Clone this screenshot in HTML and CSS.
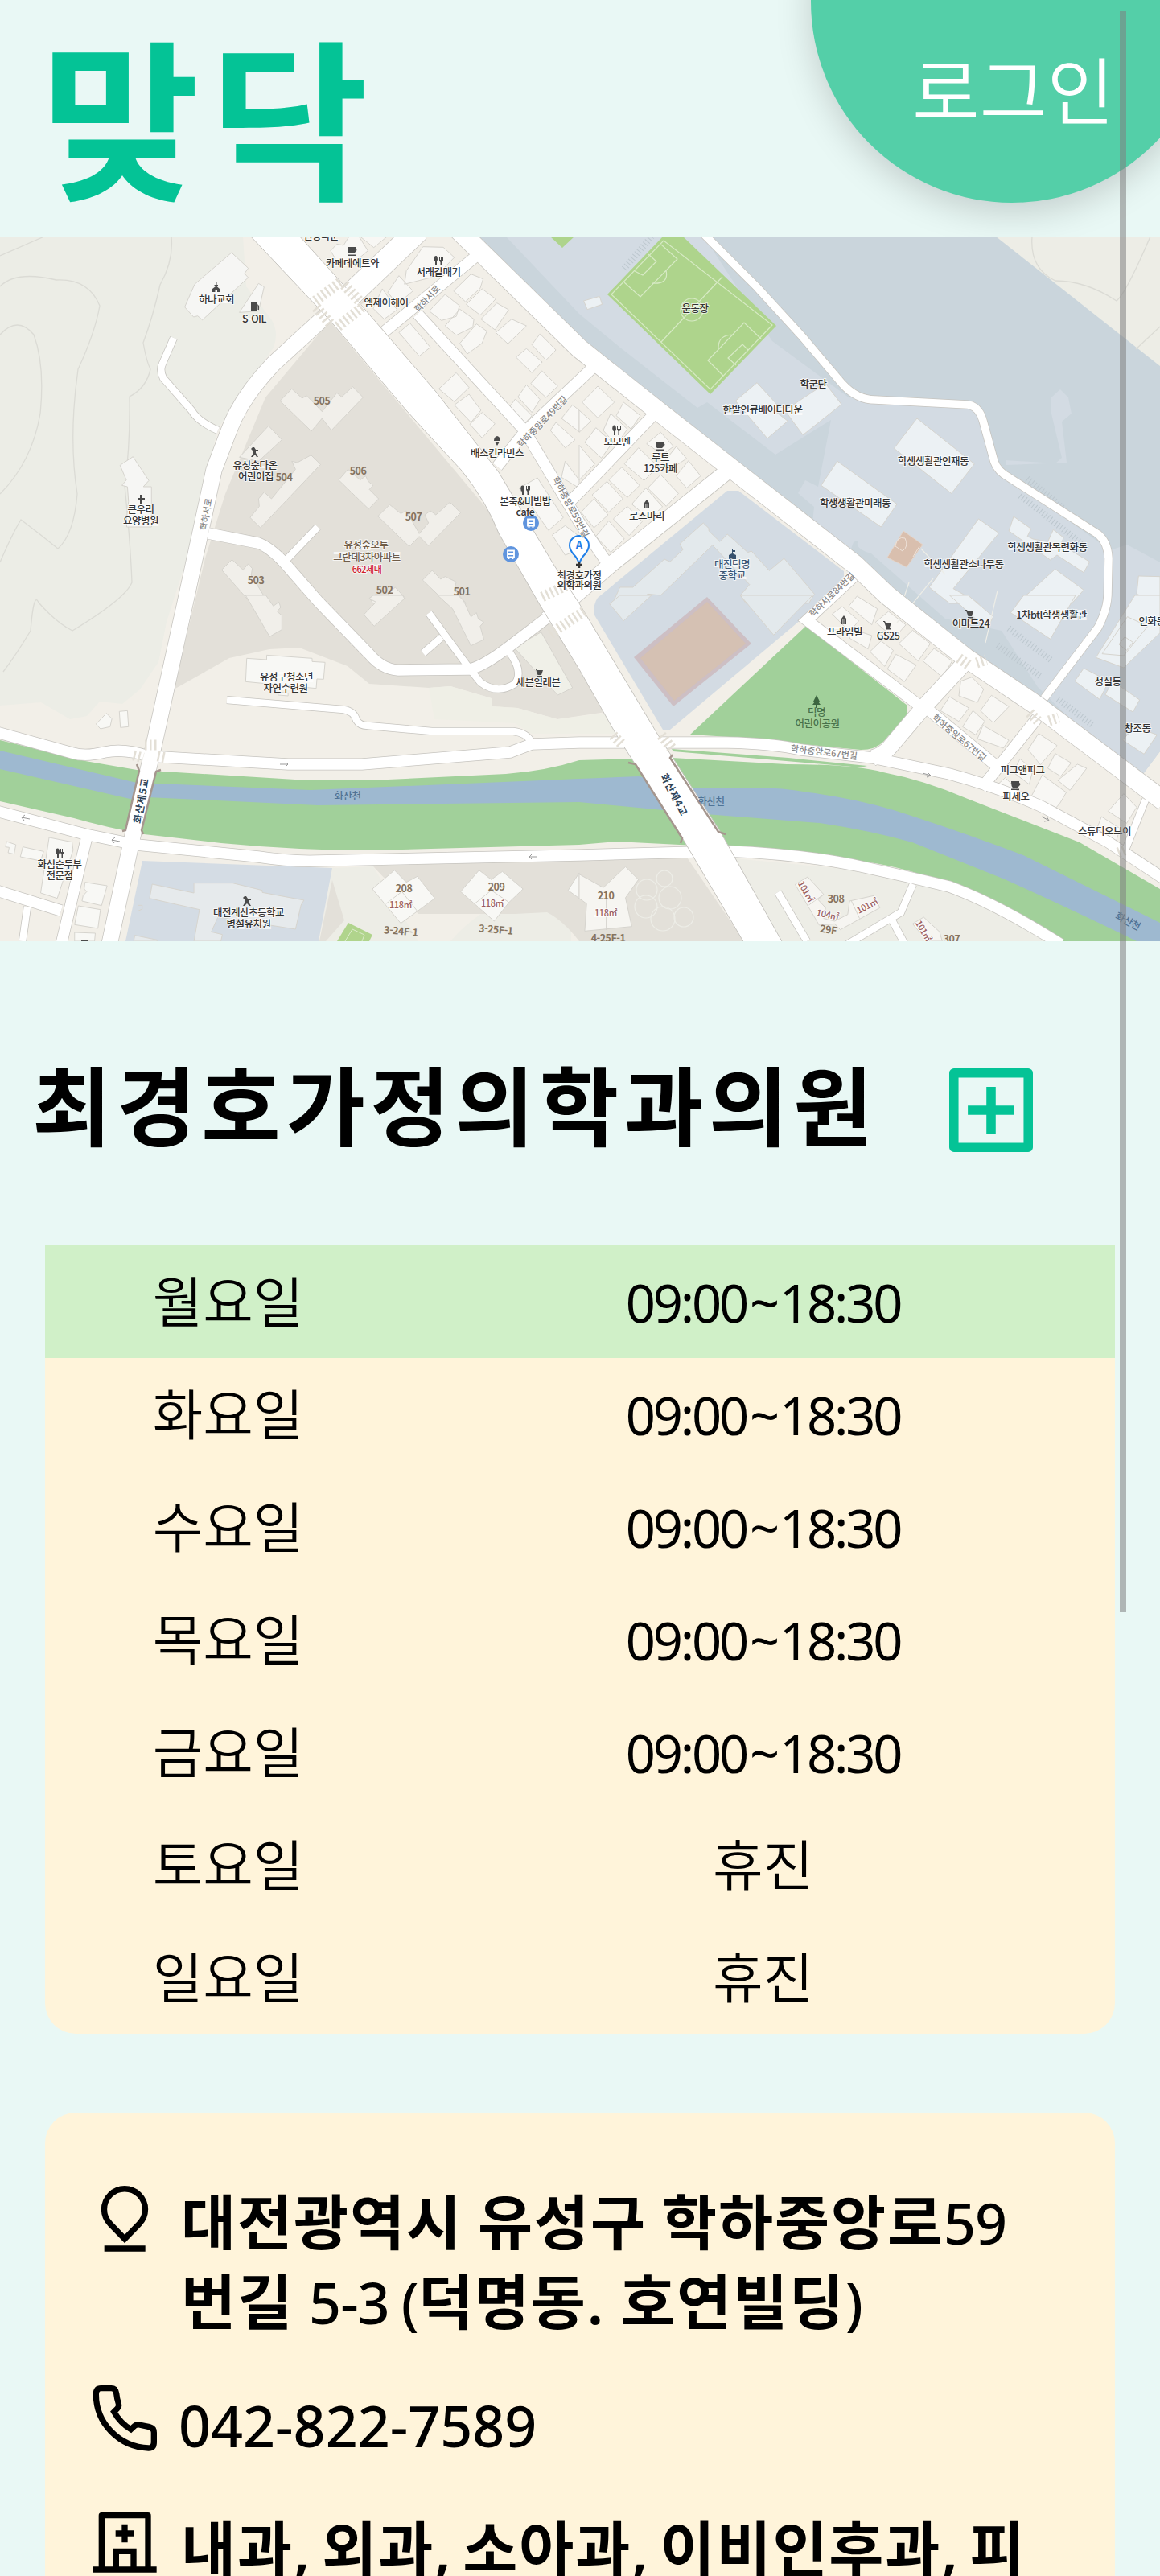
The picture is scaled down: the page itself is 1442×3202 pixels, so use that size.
FILE: index.html
```html
<!DOCTYPE html>
<html lang="ko">
<head>
<meta charset="utf-8">
<title>맞닥</title>
<link rel="stylesheet" href="styles.css">
</head>
<body>
<header class="header">
  <h1 class="logo">맞닥</h1>
  <a class="login"><span>로그인</span></a>
</header>

<svg class="map" viewBox="0 0 1442 876" width="1442" height="876">
  <rect width="1442" height="876" fill="#f2efe8"/>
  <!-- land use -->
  <path fill="#ecede6" d="M0 0H302L306 62L338 104Q347 120 340 138L270 240L240 376L207 479L197 529L174 563L152 581L124 578L108 596L87 600L51 579L0 583Z"/>
  <path fill="#e3e0d9" d="M216 563L285 524L335 513L372 511L432 534L459 556L533 561L560 559L611 574V584L643 586L693 600L760 590L700 470L640 380L410 105L330 200L280 320L255 400Z"/>
  <path fill="#efefe6" d="M533 561L560 559L611 574V584L643 586L693 600L770 590V618H661L640 605L540 600Z"/>
  <path fill="#cad5dc" d="M590 0H1442V640L1412 680L1056 408L720 139Z"/>
  <path fill="#d3dbe3" d="M629 0H875L960 130L1055 200L1215 208L1240 290L1380 390L1401 383L1442 405V640L1412 680L1290 560L1245 490L1175 475L1083 394Q1050 385 1080 365L1134 349L1195 320L1224 314L1195 345L1207 365L1170 378L1134 349L1061 380L1056 393L1010 356L1012 336L992 319L1001 303L1017 311L1033 228L964 271L879 206L867 213L771 138L720 96Z"/>
  <path fill="#d3dbe3" d="M1312 282L1320 275L1307 220V200L1318 190L1328 200L1332 220L1320 230L1326 281L1250 284V278Z"/>
  <path fill="#edede6" d="M1238 0H1442V161Z"/>
  <path fill="#d3dbe3" d="M904 316H918L1049 416L1049 424L996 476L833 613H824L738 469Q738 456 743 449Z"/>
  <path fill="#edede6" d="M413 785L464 783L520 876H397ZM560 876Q590 840 640 820Q690 818 710 860V876ZM880 770L1070 788L1180 815L1319 876H960Z"/>
  <path fill="#e3e0d9" d="M464 783L850 766L925 876H720Q700 850 680 840L640 842H580L520 842ZM413 800L428 850L405 876H397Z"/>
  <path fill="#d4dce4" d="M177 776L413 785L396 876H156Z"/>
  <!-- stream -->
  <path fill="#a1d09a" d="M0 626L106 652L170 663L367 675H482L629 668Q680 664 720 651L835 648L978 656Q1060 656 1098 666Q1150 676 1203 699L1342 753L1442 811V876H1319Q1260 840 1203 816Q1150 790 1088 779L904 759L766 752L720 756L459 763Q370 763 275 754L179 743Q130 734 92 723L0 702Z"/>
  <path fill="#9eb9d0" d="M0 639L170 679L386 688L720 674L794 671L858 686L923 685Q970 684 1005 691Q1060 698 1111 713Q1190 738 1272 769L1442 853V876H1413Q1340 840 1249 799L1134 753Q1080 738 1019 729L877 718L720 703L395 707L184 697L166 700L0 662Z"/>
  <!-- contours -->
  <g fill="none" stroke="#dbdbd5" stroke-width="1.3">
    <path d="M0 24L55 0M213 0Q216 30 199 60Q190 100 178 132Q182 155 187 165Q182 188 161 199Q162 260 155 310Q162 380 164 430Q156 450 90 490Q70 480 48 455Q42 440 38 490Q20 520 4 541"/>
    <path d="M0 62Q20 42 70 54Q110 52 124 86Q118 120 97 165Q85 250 96 320Q92 370 72 388Q50 370 26 352Q15 370 0 405"/>
    <path d="M0 122Q22 98 42 122Q56 160 50 220Q40 280 0 320M1283 0Q1280 40 1312 55Q1350 55 1388 80Q1400 70 1430 0M1412 140L1442 112"/>
  </g>
  <!-- sports grounds -->
  <path fill="#aed48c" d="M824 0H849L965 111L883 196L755 72ZM684 0H714L699 14Z"/>
  <g fill="none" stroke="#d7eac5" stroke-width="1.2">
    <path d="M760 72L825 5L960 110L883 190ZM822 131L898 50M776 57L796 75L842 28L822 10M789 43L799 48L816 31L806 22M946 127L925 107L880 154L899 173M930 141L923 134L905 151L915 160M810 58Q832 60 828 42M893 138Q893 122 912 122"/>
    <circle cx="860" cy="91" r="14"/>
  </g>
  <path fill="#cdbfc4" d="M879 448L934 506L837 584L788 523Z"/>
  <path fill="#d5c1b3" d="M879 454L927 506L838 577L796 524Z"/>
  <path fill="#d9bfae" stroke="#e6d5c9" d="M1123 366L1147 383L1127 411L1103 399Z"/>
  <path fill="none" stroke="#eee2d9" d="M1113 385Q1115 372 1125 375Q1130 385 1122 391ZM1135 398L1143 385"/>
  <path fill="#a1d09a" d="M1002 484L1128 583V594L1098 628Q1088 638 1070 638L996 631L923 623L858 619ZM835 637L980 648L1078 658L1070 660L837 640Z"/>
  <path fill="#b0d48c" d="M433 853L463 868L459 876H419Z"/>
  <path fill="none" stroke="#dcebcb" d="M429 876L438 861L453 868L450 876"/>

  <!-- buildings -->
  <g class="bld" transform="translate(0 -4) scale(.45918 .33333)">
    <path fill="#f6f6f4" d="M627 72L672 130L662 150L672 165L548 323L535 308L524 312L500 275L527 190ZM700 187L715 200L700 290L648 295Z"/>
    <path fill="#f8f7f4" d="M895 65L912 40L930 45L945 12L972 12L996 65L950 118L910 100ZM975 12H1048L1012 53ZM1145 50L1200 52L1230 90L1180 160L1095 190L1100 140ZM1080 158L1118 215L1075 265L1050 220ZM1035 207L1075 285L1040 320L1010 280ZM1275 152L1308 170L1300 205L1260 255L1228 215ZM1205 228L1244 270L1235 310L1195 325L1162 290ZM1305 207L1342 245L1300 305L1262 265ZM1245 283L1283 320L1280 350L1235 380L1205 345ZM1345 260L1377 285L1340 360L1302 320ZM1290 338L1318 365L1305 410L1265 450L1245 410ZM1385 320L1425 345L1375 412L1342 370ZM1110 335L1165 425L1135 458L1080 370ZM1462 375L1505 435L1478 473L1440 415ZM1425 430L1468 480L1440 520L1397 462ZM1235 520L1270 575L1230 628L1188 580ZM1270 600L1302 660L1275 705L1230 640ZM1305 668L1340 710L1305 763L1272 712ZM1467 513L1510 570L1478 612L1437 560ZM1425 565L1462 620L1440 668L1402 610ZM1395 618L1440 680L1420 710L1378 650ZM1505 705L1557 770L1530 800L1490 735ZM1455 912L1525 1060L1485 1108L1440 1020L1405 950ZM1530 850L1568 920V950L1520 910ZM1530 1090L1568 1130V1180L1530 1200L1495 1125ZM1550 640L1568 660V740L1520 690Z"/>
    <path fill="#f1efea" d="M790 580L818 615L830 605L872 665L912 595L925 610L955 572L983 612L897 735L872 690L843 738L758 625ZM727 718L763 770L700 850L648 835ZM842 827L868 862L705 1098L677 1060L702 1018L700 990L715 965L735 990L800 880L790 850L805 855ZM942 880L975 920L990 905L997 925L1010 940L1000 955L1025 990L998 1028L917 920ZM1055 1012L1085 1045L1100 1035L1135 1120L1160 1080L1150 1050L1165 1035L1180 1050L1218 1003L1247 1042L1160 1165L1135 1130L1108 1168L1023 1055ZM628 1217L658 1255L672 1233L683 1250L680 1275L727 1380H680L600 1255ZM1170 1257L1193 1290L1205 1280L1235 1300L1230 1330L1262 1380H1210L1144 1293ZM1070 1320L1097 1360L1080 1380H1010L1000 1360L1018 1345L1040 1360Z"/>
    <path fill="#f6f6f4" d="M360 833L403 922L388 945H410V1095H343V1060L348 1000L345 945L330 940L342 920L325 865Z"/>
  </g>
  <g class="bld" transform="translate(720 -4) scale(.46046 .33333)">
    <path fill="#f8f7f4" d="M50 570L95 630L50 688L8 630ZM120 630L165 680L140 730L100 680ZM85 672L130 730L100 790L65 735ZM45 725L90 780L60 838L15 780ZM0 660L32 700L0 742ZM0 790L42 860L0 920ZM220 742L255 795L225 825L182 785ZM262 795L290 840L240 885L225 860ZM160 800L213 870L175 922L122 860ZM295 848L328 905L290 950L262 905ZM115 872L163 940L130 985L80 920ZM220 900L268 970L235 1018L185 950ZM75 925L118 990L80 1040L35 975ZM180 950L225 1020L190 1065L142 1010ZM40 990L78 1050L40 1098L5 1040ZM130 1018L170 1075L135 1127L92 1065ZM80 1072L122 1140L85 1190L45 1130Z"/>
    <path fill="#ecf1f4" d="M12 252L55 235L62 265L22 284ZM480 557L535 640L530 665L563 700L508 765L422 625ZM665 560L708 638L604 752L555 660ZM912 690L1067 860L1005 970L850 802ZM697 850L858 1010L815 1095L653 940ZM1078 1065L1133 1118L1010 1325L1080 1380H1000L945 1320ZM1173 1056L1220 1102L1210 1130L1225 1140L1265 1150L1280 1105L1308 1135L1300 1160L1378 1225L1362 1265L1290 1200L1272 1218L1160 1110ZM1285 1252L1362 1330L1330 1380H1180L1215 1340ZM1510 1278L1568 1280V1380L1505 1345Z"/>
    <path fill="#e3e9ec" d="M335 1080L350 1100V1110L380 1150L400 1122L455 1190L465 1185L513 1258L553 1212L635 1345L620 1380H450L435 1350L460 1310L360 1163L220 1350L185 1345L165 1370L90 1380L110 1320H145L230 1215L245 1225L280 1180L272 1158Z"/>
  </g>
  <g class="bld" transform="translate(0 446) scale(.45918 .33333)">
    <path fill="#f1efea" d="M665 0H720L740 40L755 25L760 45L750 60L763 75V128L730 154ZM1010 0L1000 12L1018 25L985 72L1013 115L1095 12L1090 0ZM1185 0H1240L1255 20L1275 80L1290 65L1295 88L1310 100L1300 115L1310 165L1275 188L1225 50Z"/>
    <path fill="#f8f8f5" d="M668 235L722 240V223L845 235V247L880 250L876 313L858 312L856 347L800 340L665 322ZM753 360L780 365V375L753 372ZM288 440L303 460L298 490L272 498L260 480ZM323 433L345 430L348 490L326 493ZM133 903L195 920L198 950L155 1130L110 1110ZM62 938L118 955L110 990L55 975ZM18 918L43 930L38 965L22 960L25 940L15 938ZM230 1070L290 1083L275 1157L222 1140L225 1120L235 1105L228 1095ZM212 1158L272 1172L265 1242L202 1228ZM202 1257L258 1260L256 1290H202ZM1068 1025L1100 1070L1130 1048L1177 1130L1130 1178L1085 1223L1008 1095ZM1297 1025L1330 1060L1360 1030L1416 1095L1378 1145L1338 1215L1247 1105ZM1568 1035L1538 1100L1568 1130Z"/>
    <path fill="#f0f0e8" d="M1392 195L1465 137L1550 345L1510 372Z"/>
    <path fill="#e6eaec" d="M412 1077L525 1110V1073H630L710 1100V1108L823 1137L815 1155L800 1245L590 1200L572 1255L602 1265L598 1290H525L540 1172L405 1130ZM365 1268L425 1285V1290H362Z"/>
    <path fill="none" d="M1045 1150L1088 1105L1130 1178M1285 1150L1330 1100L1378 1145M373 1156H385V1170L374 1177"/>
  </g>
  <g class="bld" transform="translate(720 446) scale(.46046 .33333)">
    <path fill="#e3e9ec" d="M110 0H195L120 95L82 32ZM435 0H630L525 148Z"/>
    <path fill="#ecf1f4" d="M1000 0H1050L1118 80L1100 125ZM1200 0H1340L1272 163L1165 65ZM1500 0H1568V140L1470 270L1395 232ZM1362 272L1430 320L1405 388L1338 320ZM1440 320L1513 390L1495 435L1420 370ZM1500 490L1560 520L1525 592L1467 540Z"/>
    <path fill="#f8f7f4" d="M750 3L805 50L790 110L728 40ZM710 42L755 95L730 135L683 70ZM835 60L882 110L850 160L800 100ZM735 125L790 150L780 200L730 160ZM900 130L948 180L915 245L863 180ZM815 170L848 205L825 265L785 210ZM855 220L910 260L878 322L832 275ZM958 198L1007 245L980 305L928 245ZM1060 305L1092 350L1075 400L1025 375L1030 320ZM1113 373L1160 415L1118 475L1083 430ZM1000 378L1052 420L1025 470L975 430ZM1063 430L1095 470L1070 520L1035 490ZM1090 485L1160 540L1145 570L1075 535ZM1240 515L1290 560L1245 632L1212 575ZM1285 590L1328 625L1300 675L1265 645ZM1345 630L1370 645L1325 727L1292 690ZM1190 610L1225 650L1215 705L1172 660ZM1150 680L1190 735L1170 755L1122 715ZM1250 670L1315 735L1298 775L1275 812L1215 765ZM1470 740L1505 790L1478 850L1428 805ZM1410 825L1460 870L1445 938L1395 880Z"/>
    <path fill="#f6f5f1" d="M125 1012L160 1060L125 1128L142 1235L15 1252L20 1150L0 1130V1040L65 1090ZM617 1050L660 1115L645 1135L665 1165L660 1205L690 1215L725 1190L730 1140L795 1120L812 1165L705 1247L690 1225L648 1230L583 1078ZM930 1200L973 1255L980 1290H940L900 1225Z"/>
    <path fill="none" stroke="#aaa" d="M1480 80L1535 115L1470 225L1412 218ZM1473 155L1495 175L1478 205L1457 183ZM73 1130V1248M620 1155L660 1115M735 1140L757 1205"/>
  </g>
  <g fill="none" stroke="#edede7" stroke-width="1.2">
    <circle cx="826" cy="798" r="10"/><circle cx="804" cy="812" r="13"/><circle cx="833" cy="822" r="14"/><circle cx="803" cy="833" r="14"/><circle cx="824" cy="848" r="15"/><circle cx="850" cy="846" r="12"/>
    <path d="M1115 480L1160 425M1130 430L1120 460M1225 505L1240 440M1145 388L1175 420"/>
  </g>
  <!-- parking hatches -->
  <g fill="none" stroke="#bcc7ce" stroke-width="8" stroke-dasharray="1 3">
    <path d="M1277 301L1322 338M1268 322L1345 382M1254 487L1307 527M1240 508L1295 548M1315 575L1358 607M776 40L810 0"/>
  </g>

  <!-- streets -->
  <g class="casing">
    <path stroke-width="10" d="M216 126L202 158Q198 166 203 176L238 216Q246 230 271 241M354 404L395 361M533 468L585 539L597 554Q618 570 640 556Q652 540 631 514M526 518L549 498M282 576L427 588Q440 590 443 601Q447 608 457 608L537 615H638Q655 617 661 629M34 833L28 876M967 815L1003 876M1135 805L1120 840L1053 880M1109 850L1125 880M1424 700L1398 765"/>
    <path stroke-width="15" d="M1155 589L1236 656M1289 599L1220 686M259 369L321 381Q335 386 354 406L395 453L459 519Q475 538 495 539L583 538Q600 535 634 509L684 471M478 118L590 26M519 96L652 241L720 355L759 412M618 286L652 243L740 160M705 333L722 316L812 222M1061 423L1003 477L1143 583M108 746L76 880M-4 813L76 838"/>
    <path stroke-width="11" d="M868 -10L941 63L996 123L1047 183Q1065 203 1088 203L1203 209Q1217 211 1222 229L1236 280Q1240 292 1255 300L1365 370Q1377 380 1378 400L1377 446Q1376 465 1365 486L1298 574"/>
    <path stroke-width="15" d="M-5 616L90 642Q106 647 130 641Q155 636 184 646L358 656H450L634 641L661 631L720 629H775L904 629Q960 630 996 638L1084 648L1180 668Q1240 684 1296 709L1378 753L1445 797M-5 714L106 743L170 756L321 771Q360 777 395 776L720 769L904 764Q1000 768 1070 783Q1130 796 1180 808Q1240 830 1319 880"/>
    <path stroke-width="21" d="M412 92L340 158Q300 200 285 240L266 290L230 456L190 638L166 740L136 880M904 292L759 408L680 476M1201 528L1150 583L1105 636Q1098 644 1085 648"/>
    <path stroke-width="25" d="M570 -8L720 139L817 216L909 288L1063 408L1103 446L1201 524L1289 583L1447 702"/>
    <path stroke-width="30" d="M430 78L520 -8"/>
  </g>
  <g class="roads">
    <path stroke-width="8.5" d="M216 126L202 158Q198 166 203 176L238 216Q246 230 271 241M354 404L395 361M533 468L585 539L597 554Q618 570 640 556Q652 540 631 514M526 518L549 498M282 576L427 588Q440 590 443 601Q447 608 457 608L537 615H638Q655 617 661 629M34 833L28 876M967 815L1003 876M1135 805L1120 840L1053 880M1109 850L1125 880M1424 700L1398 765"/>
    <path stroke-width="13.5" d="M1155 589L1236 656M1289 599L1220 686M259 369L321 381Q335 386 354 406L395 453L459 519Q475 538 495 539L583 538Q600 535 634 509L684 471M478 118L590 26M519 96L652 241L720 355L759 412M618 286L652 243L740 160M705 333L722 316L812 222M1061 423L1003 477L1143 583M108 746L76 880M-4 813L76 838"/>
    <path stroke-width="9.5" d="M868 -10L941 63L996 123L1047 183Q1065 203 1088 203L1203 209Q1217 211 1222 229L1236 280Q1240 292 1255 300L1365 370Q1377 380 1378 400L1377 446Q1376 465 1365 486L1298 574"/>
    <path stroke-width="13.5" d="M-5 616L90 642Q106 647 130 641Q155 636 184 646L358 656H450L634 641L661 631L720 629H775L904 629Q960 630 996 638L1084 648L1180 668Q1240 684 1296 709L1378 753L1445 797M-5 714L106 743L170 756L321 771Q360 777 395 776L720 769L904 764Q1000 768 1070 783Q1130 796 1180 808Q1240 830 1319 880"/>
    <path stroke-width="19.5" d="M412 92L340 158Q300 200 285 240L266 290L230 456L190 638L166 740L136 880M904 292L759 408L680 476M1201 528L1150 583L1105 636Q1098 644 1085 648"/>
    <path stroke-width="23.5" d="M570 -8L720 139L817 216L909 288L1063 408L1103 446L1201 524L1289 583L1447 702"/>
    <path stroke-width="28.5" d="M430 78L520 -8"/>
  </g>
  <path fill="#fff" stroke="#c6c4bf" d="M310 -2L395 88L416 111L505 216Q545 260 574 291Q605 330 620 369L670 456L720 538L766 619L849 749L925 878H973L895 739L817 618L720 456L689 409L620 293L542 193L448 84L426 59L371 -2Z"/>
  <path fill="none" stroke="#fff" stroke-width="17" d="M404 96L418 84M424 80L436 70M694 466L706 456"/>
  <path fill="none" stroke="#fff" stroke-width="12" d="M762 629H832"/>
  <!-- crossings -->
  <g fill="none" stroke="#e3dfd6" stroke-width="13" stroke-dasharray="2.5 3.5">
    <path d="M392 80L424 56M428 60L452 86M393 88L412 110M420 112L450 88M674 448L712 430M684 494L726 466M180 632H198M166 645L178 648M196 646L206 648M762 620L774 632M822 620L835 636M1192 524L1206 534M1214 530L1226 526M1280 592L1290 602M1304 602L1316 598M1390 766L1400 762"/>
  </g>
  <!-- bridge rails -->
  <path fill="none" stroke="#a5968e" stroke-width="2.5" d="M170 656L173 664L156 738L152 739M200 663L194 665L176 738L178 743M781 654L790 656L848 748L846 754M836 644L833 648L893 740L902 743"/>

  <g class="arrows"><path d="M348 656H358M355 653L358 656L355 659M37 724L27 722M31 719L27 722L30 726M149 752L139 750M143 747L139 750L142 754M668 771H658M661 768L658 771L661 774M1147 667L1157 670M1153 666L1157 670L1152 672M1295 721L1304 726M1301 721L1304 726L1298 727"/></g>

  <!-- place symbols -->
  <g fill="#4a4a4a">
    <path d="M432 13H442V15Q445 16 442 19L440 21H434Q432 20 432 13ZM432 22.500H442V24H432Z"/>
    <path d="M815 255H825V257Q828 258 825 261L823 263H817Q815 262 815 255ZM815 264.500H825V266H815ZM1257 677H1267V679Q1270 680 1267 683L1265 685H1259Q1257 684 1257 677ZM1257 686.500H1267V688H1257Z"/>
    <path d="M540 25Q544 22 544 29L543 31V36H541V31Q538 29 540 25ZM546 25H547V29H548V25H549V29H550V25H551V30L549 32V36H547.500V32L546 30ZM648 310Q652 308 652 315L651 317V321H649V317Q646 315 648 310ZM654 310H655V314H656V310H657V314H658V310H659V315L657 317V321H655.500V317L654 315ZM762 235Q766 233 766 240L765 242V247H763V242Q760 240 762 235ZM767 235H768V239H769V235H770V239H771V235H772V240L770 242V247H768.500V242L767 240ZM70 761Q74 759 74 766L73 768V772H71V768Q68 766 70 761ZM75 761H76V765H77V761H78V765H79V761H80V766L78 768V772H76.500V768L75 766Z"/>
    <path d="M268 57H269.500V60H271V61H269.500V62L273 65V69H270V66H267.500V69H264V65L268 62V61H266.500V60H268ZM312 82H319V93H312ZM320 84L322 86V91H320.500V87ZM174 321H177V325H180V328H177V332H174V328H171V325H174ZM618 248Q622 249 622 254H614Q614 249 618 248ZM615 255H621L618 260ZM801 338V331L804 327L807 331V338H805.500V332H804.700V338H803.300V332H802.500V338ZM1046 482V475L1049 471L1052 475V482H1050.500V476H1049.700V482H1048.300V476H1047.500V482Z"/>
    <path d="M665 537H667L668 539H675L673 545H668.500L666 538H665ZM668 546H674V547H668ZM1200 464H1202L1203 466H1210L1208 472H1203.500L1201 465H1200ZM1203 473H1209V474.500H1203ZM1098 478H1100L1101 480H1108L1106 486H1101.500L1099 479H1098ZM1101 487H1107V488.500H1101Z"/>
    <path d="M314 262H316L318 265H321V267H318V269L321 274H319L317 271L314 274H312L315 269V267L312 264ZM304 820H306L308 823H312V825H309V827L312 832H310L307 829L304 832H302L305 827V825L302 822Z"/>
    <path fill="#36506d" d="M910 388H911V390H914V392H911V394L915 396V401H906V396L910 394Z"/>
    <path fill="#3c6540" d="M1015 570L1019 578H1017L1020 582H1016V586H1014V582H1010L1013 578H1011Z"/>
    <path d="M101 874H110V876H101Z"/>
  </g>
  <g>
    <g fill="#5f94de"><circle cx="660" cy="356" r="10"/><circle cx="635" cy="395" r="10"/></g>
    <path fill="none" stroke="#fff" stroke-width="1.8" d="M656 351.500H664V359.500H656ZM656 356H664M657.500 360V362M662.500 360V362M631 390.500H639V398.500H631ZM631 395H639M632.500 399V401M637.500 399V401"/>
    <path fill="#fff" stroke="#1f7fe8" stroke-width="2" d="M720 407Q718 400 713 395Q708 389 708 384A12 12 0 0 1 732 384Q732 389 727 395Q722 400 720 407Z"/>
    <path stroke="#333" stroke-width="2.500" d="M716 408H724M720 405V412"/>
    <text x="720" y="389" font-size="14" font-weight="600" fill="#1f7fe8" text-anchor="middle">A</text>
  </g>

  <g class="labels">
    <text x="399" y="4">선광타운</text><text x="438" y="38">카페데에트와</text><text x="545" y="49">서래갈매기</text>
    <text x="269" y="83">하나교회</text><text x="316" y="107">S-OIL</text><text x="480" y="87">엠제이헤어</text>
    <text x="618" y="274">배스킨라빈스</text><text x="175" y="344">큰우리</text><text x="175" y="358">요양병원</text>
    <text x="317" y="289">유성숲다온</text><text x="318" y="303">어린이집</text>
    <text x="653" y="334">본죽&amp;비빔밥</text><text x="653" y="347">cafe</text>
    <text x="720" y="426">최경호가정</text><text x="720" y="438">의학과의원</text>
    <text x="767" y="260">모모멘</text><text x="821" y="279">루트</text><text x="821" y="293">125카페</text><text x="804" y="352">로즈마리</text>
    <text x="864" y="94">운동장</text><text x="1011" y="188">학군단</text><text x="948" y="220">한밭인큐베이터타운</text>
    <text x="1160" y="284">학생생활관인재동</text><text x="1063" y="336">학생생활관미래동</text><text x="1302" y="391">학생생활관목련화동</text><text x="1198" y="412">학생생활관소나무동</text>
    <text x="1050" y="496">프라임빌</text><text x="1104" y="501">GS25</text><text x="1207" y="486">이마트24</text><text x="1307" y="475">1차btl학생생활관</text>
    <text x="1432" y="483">인화동</text><text x="1377" y="558">성실동</text><text x="1414" y="616">창조동</text>
    <text x="1271" y="668">피그앤피그</text><text x="1263" y="701">파세오</text><text x="1373" y="744">스튜디오브이</text>
    <text x="356" y="552">유성구청소년</text><text x="355" y="566">자연수련원</text><text x="669" y="559">세븐일레븐</text>
    <text x="74" y="785">화심순두부</text><text x="74" y="799">전문점</text><text x="309" y="845">대전계산초등학교</text><text x="309" y="859">병설유치원</text>
    <g fill="#3d5876"><text x="910" y="412">대전덕명</text><text x="910" y="426">중학교</text></g>
    <g fill="#48714a" class="park"><text x="1015" y="596">덕명</text><text x="1016" y="610">어린이공원</text></g>
    <g fill="#6f5c48"><text x="455" y="388">유성숲오투</text><text x="456" y="403">그란데3차아파트</text></g>
    <text x="456" y="418" class="red">662세대</text>
    <g class="num">
      <text x="400" y="209">505</text><text x="353" y="304">504</text><text x="445" y="296">506</text><text x="514" y="353">507</text><text x="318" y="432">503</text><text x="478" y="444">502</text><text x="574" y="446">501</text>
      <text x="502" y="815">208</text><text x="617" y="813">209</text><text x="753" y="824">210</text><text x="1039" y="828">308</text><text x="1183" y="878">307</text>
      <text x="498" y="868" transform="rotate(5 498 868)">3-24F-1</text><text x="616" y="866" transform="rotate(5 616 866)">3-25F-1</text><text x="756" y="877">4-25F-1</text><text x="1029" y="866" transform="rotate(8 1029 866)">29F</text>
    </g>
    <g class="area"><text x="498" y="835">118㎡</text><text x="612" y="833">118㎡</text><text x="753" y="845">118㎡</text><text x="1029" y="847" transform="rotate(12 1029 842)">104㎡</text><text x="1078" y="836" transform="rotate(-28 1078 832)">101㎡</text><text x="1002" y="818" transform="rotate(60 1002 814)">101㎡</text><text x="1148" y="867" transform="rotate(60 1148 863)">101㎡</text></g>
    <g class="street">
      <text transform="translate(534 80) rotate(-47)">학하서로</text><text transform="translate(260 346) rotate(-80)">학하서로</text>
      <text transform="translate(677 233) rotate(-46)">학하중앙로49번길</text><text transform="translate(706 338) rotate(62)">학하중앙로59번길</text>
      <text transform="translate(1037 448) rotate(-44)">학하서로84번길</text><text transform="translate(1024 645) rotate(7)">학하중앙로67번길</text><text transform="translate(1190 626) rotate(40)">학하중앙로67번길</text>
    </g>
    <g fill="#4f7396" class="water"><text x="432" y="700">화산천</text><text x="884" y="707">화산천</text><text transform="translate(1400 855) rotate(28)">화산천</text></g>
    <g fill="#2e4358" class="bridge"><text transform="translate(180 702) rotate(-80)">화산제5교</text><text transform="translate(834 696) rotate(63)">화산제4교</text></g>
  </g>
</svg>

<main class="detail">
  <div class="title">
    <h2>최경호가정의학과의원</h2>
    <svg class="add" viewBox="3 3 18 18"><path fill="none" stroke="#04c396" stroke-width="2" stroke-linejoin="round" d="M4 4H20V20H4ZM7 12H17M12 7V17"/></svg>
  </div>
  <div class="hours">
    <div class="row today"><span>월요일</span><span class="time">09:00<i>~</i>18:30</span></div>
    <div class="row"><span>화요일</span><span class="time">09:00<i>~</i>18:30</span></div>
    <div class="row"><span>수요일</span><span class="time">09:00<i>~</i>18:30</span></div>
    <div class="row"><span>목요일</span><span class="time">09:00<i>~</i>18:30</span></div>
    <div class="row"><span>금요일</span><span class="time">09:00<i>~</i>18:30</span></div>
    <div class="row"><span>토요일</span><span>휴진</span></div>
    <div class="row"><span>일요일</span><span>휴진</span></div>
  </div>
  <div class="info">
    <div class="item address">
      <svg class="icon" viewBox="106 102 240 270"><path d="M226 312L172 256A76.500 76.500 0 1 1 280 256ZM150 348H303"/></svg>
      <p>대전광역시 유성구 학하중앙로<span class="digits">59</span><br>번길 <span class="digits">5-3 (</span>덕명동. 호연빌딩<span class="digits">)</span></p>
    </div>
    <div class="item phone">
      <svg class="icon" viewBox="106 846 240 270"><path d="M137 869H176Q192 869 195 888Q197 908 203 926Q206 937 198 945L186 957Q210 999 249 1022L262 1010Q269 1003 280 1005L318 1013Q335 1017 335 1034V1070Q335 1092 315 1092C206 1088 119 1000 119 892Q119 869 137 869Z"/></svg>
      <p><span class="digits">042-822-7589</span></p>
    </div>
    <div class="item dept">
      <svg class="icon" viewBox="106 1320 240 270"><path stroke-linejoin="round" d="M140 1545V1343H313V1545"/><path d="M106 1545H345M194 1545V1477H259V1545M192 1410H260M226 1376V1444"/></svg>
      <p>내과, 외과, 소아과, 이비인후과, 피</p>
    </div>
  </div>
</main>
<div class="scrollbar"></div>
</body>
</html>
```
FILE: styles.css
```css
* { box-sizing: border-box; }
body {
  margin: 0;
  width: 1442px;
  height: 3202px;
  overflow: hidden;
  position: relative;
  background: #e9f8f5;
  color: #000;
  font-family: "Noto Sans", "Noto Sans CJK KR", sans-serif;
}
h1, h2, p { margin: 0; }
.header {
  position: relative;
  height: 294px;
  padding-left: 51px;
}
.logo {
  font-size: 214px;
  line-height: 298px;
  letter-spacing: 13px;
  font-weight: 700;
  color: #04c396;
  white-space: nowrap;
}
.login {
  position: absolute;
  left: 1008px;
  top: -248px;
  width: 500px;
  height: 500px;
  border-radius: 50%;
  background: #54cfa8;
  box-shadow: 0 12px 44px rgba(0, 0, 0, .17);
  color: #fff;
}
.login span {
  position: absolute;
  left: 126px;
  top: 296px;
  font-size: 91px;
  line-height: 130px;
  font-weight: 350;
  white-space: nowrap;
}
.map {
  display: block;
  position: relative;
  overflow: hidden;
  font-family: "Noto Sans CJK KR", sans-serif;
}
.bld path { stroke: #d6d4ce; stroke-width: 1; vector-effect: non-scaling-stroke; }
.casing path { fill: none; stroke: #c6c4bf; }
.roads path { fill: none; stroke: #fff; }
.arrows path { fill: none; stroke: #999; }
.labels text {
  font-size: 12.5px;
  font-weight: 500;
  letter-spacing: -.5px;
  text-anchor: middle;
  paint-order: stroke;
  stroke: rgba(255, 255, 255, .7);
  stroke-width: 2px;
}
.labels { fill: #333; }
.labels .red { fill: #d0202c; font-size: 11px; }
.labels .num { fill: #85735f; }
.labels .num text { font-weight: 700; stroke: none; }
.labels .area { fill: #9b5f60; }
.labels .area text { font-size: 11px; }
.labels .street { fill: #858585; }
.labels .street text { font-size: 11px; letter-spacing: 0; }
.labels .water text, .labels .park text { stroke: none; }
.labels .bridge text { font-weight: 700; letter-spacing: .8px; }

.title {
  display: flex;
  align-items: center;
  gap: 94px;
  height: 378px;
  padding: 42px 0 0 40px;
}
.title h2 {
  width: 1046px;
  font-size: 107px;
  font-weight: 700;
  line-height: 140px;
  letter-spacing: 6.7px;
  white-space: nowrap;
  padding-bottom: 10px;
}
.add { width: 104px; height: 104px; flex: none; }
.hours, .info { margin: 0 56px; background: #fff4da; }
.hours { height: 980px; border-radius: 0 0 38px 38px; overflow: hidden; }
.row {
  display: grid;
  grid-template-columns: 455px 875px;
  height: 140px;
  line-height: 140px;
  text-align: center;
  font-size: 68px;
  font-weight: 350;
}
.row .time { font-size: 65px; line-height: 143px; font-weight: 400; letter-spacing: -3.2px; }
.time i { font-style: normal; margin: 0 3px 0 4px; }
.today { background: #d0f0c8; }
.info {
  margin-top: 98px;
  height: 700px;
  border-radius: 38px 38px 0 0;
  padding: 87px 0 0 59px;
}
.item {
  display: flex;
  gap: 30px;
  font-size: 74px;
  font-weight: 600;
  line-height: 98px;
  letter-spacing: 1.9px;
  white-space: nowrap;
}
.digits { font-size: 70px; font-weight: 500; letter-spacing: -1px; }
.address { height: 248px; word-spacing: -2px; }
.phone { height: 158px; }
.phone p { margin-left: -3px; padding-top: 4px; }
.phone .digits { letter-spacing: 0; }
.dept { word-spacing: -8.5px; }
.icon { width: 80px; height: 90px; flex: none; }
.icon path { fill: none; stroke: #000; stroke-width: 22; }
.scrollbar {
  position: absolute;
  left: 1392px;
  top: 14px;
  width: 8px;
  height: 1990px;
  background: rgba(128, 128, 128, .55);
}
```
